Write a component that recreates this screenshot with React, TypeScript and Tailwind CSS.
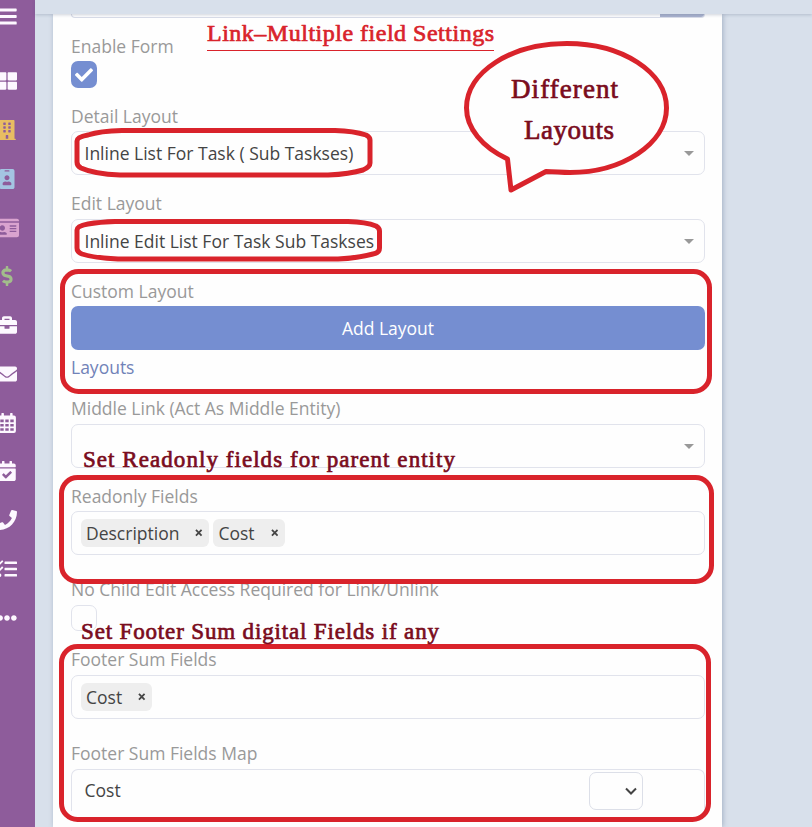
import React from "react";
import {
  FaBars, FaThLarge, FaBuilding, FaIdBadge, FaIdCard, FaDollarSign, FaBriefcase,
  FaEnvelope, FaCalendarCheck, FaPhone, FaTasks, FaEllipsisH, FaCheck,
} from "react-icons/fa";

function CalendarGrid({ size, color, className }: { size: number; color: string; className?: string }) {
  return (
    <svg width={size} height={size} viewBox="0 0 20 20" fill={color} className={className}>
      <path
        fillRule="evenodd"
        d="M5 0h1.300q.6 0 .6.600V2.500h6.200V.600q0-.6.6-.6H15q.6 0 .6.600V2.500h1.400q1.900 0 1.900 1.900V18.100q0 1.900-1.900 1.900H3.100q-1.900 0-1.900-1.900V4.400q0-1.900 1.900-1.900h1.300V.600q0-.6.6-.6zM3.300 6.600v2.600h3.400V6.600zM8.300 6.600v2.600h3.400V6.600zM13.300 6.600v2.600h3.400V6.600zM3.300 10.900v2.600h3.400v-2.600zM8.300 10.900v2.600h3.400v-2.600zM13.300 10.900v2.600h3.400v-2.600zM3.300 15.200v2.600h3.400v-2.600zM8.300 15.200v2.600h3.400v-2.600zM13.300 15.200v2.600h3.400v-2.600z"
      />
    </svg>
  );
}

const navItems = [
  { Icon: FaThLarge, color: "#fdf8ff", size: 20 },
  { Icon: FaBuilding, color: "#e8bd62", size: 20 },
  { Icon: FaIdBadge, color: "#a4c4e2", size: 20 },
  { Icon: FaIdCard, color: "#d9a3cf", size: 24 },
  { Icon: FaDollarSign, color: "#a2bd8b", size: 20 },
  { Icon: FaBriefcase, color: "#fdf8ff", size: 20 },
  { Icon: FaEnvelope, color: "#fdf8ff", size: 20 },
  { Icon: CalendarGrid, color: "#fdf8ff", size: 20 },
  { Icon: FaCalendarCheck, color: "#fdf8ff", size: 20 },
  { Icon: FaPhone, color: "#fdf8ff", size: 20 },
  { Icon: FaTasks, color: "#fdf8ff", size: 20 },
  { Icon: FaEllipsisH, color: "#fdf8ff", size: 20 },
];

function Sidebar() {
  return (
    <nav className="flex h-full w-[35px] shrink-0 flex-col bg-[#8e5c9b]">
      <div className="-ml-[6px] flex h-[57px] w-[26px] shrink-0 items-start justify-center pt-[6px]">
        <FaBars size={21} color="#fdf8ff" className="shrink-0" />
      </div>
      {navItems.map(({ Icon, color, size }, i) => (
        <div key={i} className="-ml-[6px] flex h-[48.75px] w-[26px] shrink-0 items-center justify-center">
          <Icon size={size} color={color} className="shrink-0" />
        </div>
      ))}
    </nav>
  );
}

function Field({ label, className, children }: { label: string; className: string; children: React.ReactNode }) {
  return (
    <div className={`flex shrink-0 flex-col ${className}`}>
      <div className="h-[22.5px] whitespace-nowrap leading-[22.5px] text-[#999]">{label}</div>
      {children}
    </div>
  );
}

function Box({ children, caret }: { children?: React.ReactNode; caret?: boolean }) {
  return (
    <div className="flex h-11 items-center rounded-[7px] border border-[#e1e3ec] bg-[#fefefe] pl-[12.5px] pr-[10px] text-[#444]">
      {children}
      {caret && (
        <span className="ml-auto h-0 w-0 border-x-[5px] border-t-[5px] border-x-transparent border-t-[#999]" />
      )}
    </div>
  );
}

function Tag({ children }: { children: string }) {
  return (
    <span className="mr-1 flex h-7 items-center justify-between gap-[16px] rounded-[6px] bg-[#eee] pl-[5px] pr-[6.5px]">
      {children}
      <svg width="7.5" height="7.5" viewBox="0 0 8 8" stroke="#444" strokeWidth="1.9">
        <path d="M1 1l6 6M7 1L1 7" />
      </svg>
    </span>
  );
}

function Annotations() {
  return (
    <svg
      className="pointer-events-none absolute inset-0"
      width="812"
      height="827"
      viewBox="0 0 812 827"
      fill="none"
      stroke="#d9232b"
      strokeWidth="5"
      strokeLinejoin="round"
    >
      <path d="M507.500 159C482 147 466.500 128 466.500 108C466.500 72 511 43.500 567 43.500C622 43.500 666.500 72 666.500 108C666.500 144 622 172.500 570 172.500C561 172.500 555 171.500 546 171.500L511 190Z" fill="#fefefe" />
      <path d="M88 135Q100 131 122 130.500H335Q354 131 366 135Q370 137 370 140V163Q370 167 363 170Q350 174 328 175H120Q94 174 81 168Q77 166 77 162V141Q77 137 88 135Z" />
      <path d="M88 224Q100 222 115 221.500H348Q366 222 376 226Q379.500 228 379.500 231V248Q379.500 253 373 254Q358 258 338 259H118Q94 258 82 254Q77 252 77 248V230Q77 226 88 224Z" />
      <rect x="62.500" y="271.500" width="647" height="120" rx="16" />
      <rect x="61.500" y="477.500" width="650" height="104" rx="16" />
      <rect x="61.500" y="646.500" width="647" height="173" rx="16" />
      <path d="M207 50.500H494" strokeWidth="1" />
      <g
        stroke="#7a0c1d"
        strokeWidth="0.700"
        fontFamily="Liberation Serif, serif"
        fontSize="23"
        fill="#7a0c1d"
      >
        <text x="207" y="41" textLength="287" fontSize="24" fill="#d9232b" stroke="#d9232b">Link–Multiple field Settings</text>
        <text x="511" y="98" fontSize="27" textLength="107">Different</text>
        <text x="524" y="139" fontSize="27" textLength="90">Layouts</text>
        <text x="83" y="467" textLength="372">Set Readonly fields for parent entity</text>
        <text x="81" y="639" textLength="358">Set Footer Sum digital Fields if any</text>
      </g>
    </svg>
  );
}

export default function App() {
  return (
    <div className="relative flex h-[827px] w-[812px] overflow-hidden bg-[#d8e0eb] font-['Open_Sans','Noto_Sans',sans-serif] text-[17.5px]">
      <Sidebar />
      <div className="flex min-w-0 flex-1 flex-col">
        <header className="z-10 h-[14px] shrink-0 bg-[#d8e0eb] shadow-[0_1px_3px_rgba(70,85,120,0.25)]" />
        <main className="ml-[18px] flex h-[813px] w-[669px] flex-col bg-[#fefefe] px-[18px] shadow-[1px_0_5px_rgba(70,90,120,0.35)]">
          <div className="flex h-1 w-[634px] shrink-0 justify-end overflow-hidden rounded-b-[7px] border border-t-0 border-[#d9dce8]">
            <div className="w-11 bg-[#a9b2ce]" />
          </div>
          <Field label="Enable Form" className="mt-[17px] gap-[3.5px]">
            <div className="flex h-[27px] w-[26px] items-center justify-center rounded-[7px] bg-[#758ed1]">
              <FaCheck size={18} color="#fff" />
            </div>
          </Field>
          <Field label="Detail Layout" className="mt-[17px] w-[634px] gap-[3.5px]">
            <Box caret>Inline List For Task ( Sub Taskses)</Box>
          </Field>
          <Field label="Edit Layout" className="mt-[17px] w-[634px] gap-[4.5px]">
            <Box caret>Inline Edit List For Task Sub Taskses</Box>
          </Field>
          <Field label="Custom Layout" className="mt-[17px] w-[634px] gap-[3.5px]">
            <button className="block h-11 w-full rounded-[7px] bg-[#758ed1] text-white">Add Layout</button>
            <a className="mt-[1.5px] block h-[25px] leading-6 text-[#7182b8]">Layouts</a>
          </Field>
          <Field label="Middle Link (Act As Middle Entity)" className="mt-[17px] w-[634px] gap-[4.5px]">
            <Box caret />
          </Field>
          <Field label="Readonly Fields" className="mt-[17px] w-[634px] gap-[3.5px]">
            <Box>
              <div className="-ml-[3.5px] flex">
                <Tag>Description</Tag>
                <Tag>Cost</Tag>
              </div>
            </Box>
          </Field>
          <Field label="No Child Edit Access Required for Link/Unlink" className="mt-[23px] w-[634px] gap-[4.5px]">
            <div className="h-[26px] w-[26px] rounded-[7px] border border-[#e1e3ec]" />
          </Field>
          <Field label="Footer Sum Fields" className="mt-[17px] w-[634px] gap-[4.5px]">
            <Box>
              <div className="-ml-[3.5px] flex">
                <Tag>Cost</Tag>
              </div>
            </Box>
          </Field>
          <Field label="Footer Sum Fields Map" className="mt-[23px] w-[634px] gap-[4.5px]">
            <div className="flex h-[42px] items-center justify-between rounded-t-[7px] border border-b-0 border-[#e1e3ec] pl-[12.5px] pr-[61px] text-[#444]">
              Cost
              <div className="flex h-[38px] w-[54px] items-center justify-end rounded-[7px] border border-[#dcdfe8] pr-[5px]">
                <svg width="12" height="8" viewBox="0 0 12 8" fill="none" stroke="#444" strokeWidth="2">
                  <path d="M1 1.500l5 5 5-5" />
                </svg>
              </div>
            </div>
          </Field>
        </main>
      </div>
      <Annotations />
    </div>
  );
}
